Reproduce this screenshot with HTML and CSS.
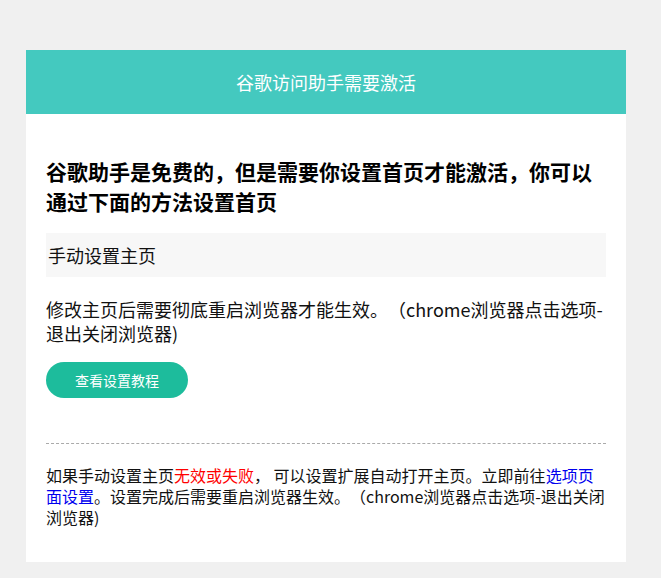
FILE: index.html
```html
<!DOCTYPE html>
<html lang="zh-CN">
<head>
<meta charset="utf-8">
<title>谷歌访问助手需要激活</title>
<link rel="stylesheet" href="styles.css">
</head>
<body>
<div class="card">
  <div class="card-header">谷歌访问助手需要激活</div>
  <div class="card-body">
    <h1 class="title">谷歌助手是免费的，但是需要你设置首页才能激活，你可以通过下面的方法设置首页</h1>
    <div class="section-label">手动设置主页</div>
    <p class="desc">修改主页后需要彻底重启浏览器才能生效。（chrome浏览器点击选项-退出关闭浏览器)</p>
    <a class="btn" href="#">查看设置教程</a>
    <div class="divider"></div>
    <p class="note">如果手动设置主页<span class="warn">无效或失败</span>， 可以设置扩展自动打开主页。立即前往<a class="link" href="#">选项页面设置</a>。设置完成后需要重启浏览器生效。（chrome浏览器点击选项-退出关闭浏览器)</p>
  </div>
</div>
</body>
</html>
```

FILE: styles.css
```css
html, body {
  margin: 0;
  padding: 0;
  background: #f0f0f0;
  font-family: "Noto Sans CJK SC", "Noto Sans", sans-serif;
  text-spacing-trim: space-all;
}
.card {
  margin: 50px 0 0 26px;
  width: 600px;
  background: #fff;
}
.card-header {
  height: 64px;
  line-height: 64px;
  background: #44c9bf;
  color: #fff;
  font-size: 18px;
  text-align: center;
}
.card-body {
  padding: 42px 20px 34px;
}
.title {
  margin: 0;
  font-size: 21px;
  line-height: 30px;
  font-weight: bold;
  color: #000;
}
.section-label {
  margin-top: 17px;
  height: 44px;
  line-height: 44px;
  padding: 0 2px;
  background: #f7f7f7;
  font-size: 18px;
  color: #111;
}
.desc {
  margin: 20px 0 0;
  font-size: 18px;
  line-height: 24px;
  color: #111;
  line-break: anywhere;
}
.btn {
  display: block;
  margin-top: 17px;
  width: 142px;
  height: 36px;
  line-height: 36px;
  border-radius: 18px;
  background: #1dbc9c;
  color: #fff;
  font-size: 14px;
  text-align: center;
  text-decoration: none;
}
.divider {
  margin-top: 45px;
  border-top: 1px dashed #aaa;
}
.note {
  margin: 21px 0 0;
  font-size: 16px;
  line-height: 21px;
  color: #111;
  line-break: anywhere;
}
.warn {
  color: #ff0000;
}
.link {
  color: #0000ee;
  text-decoration: none;
}
```
